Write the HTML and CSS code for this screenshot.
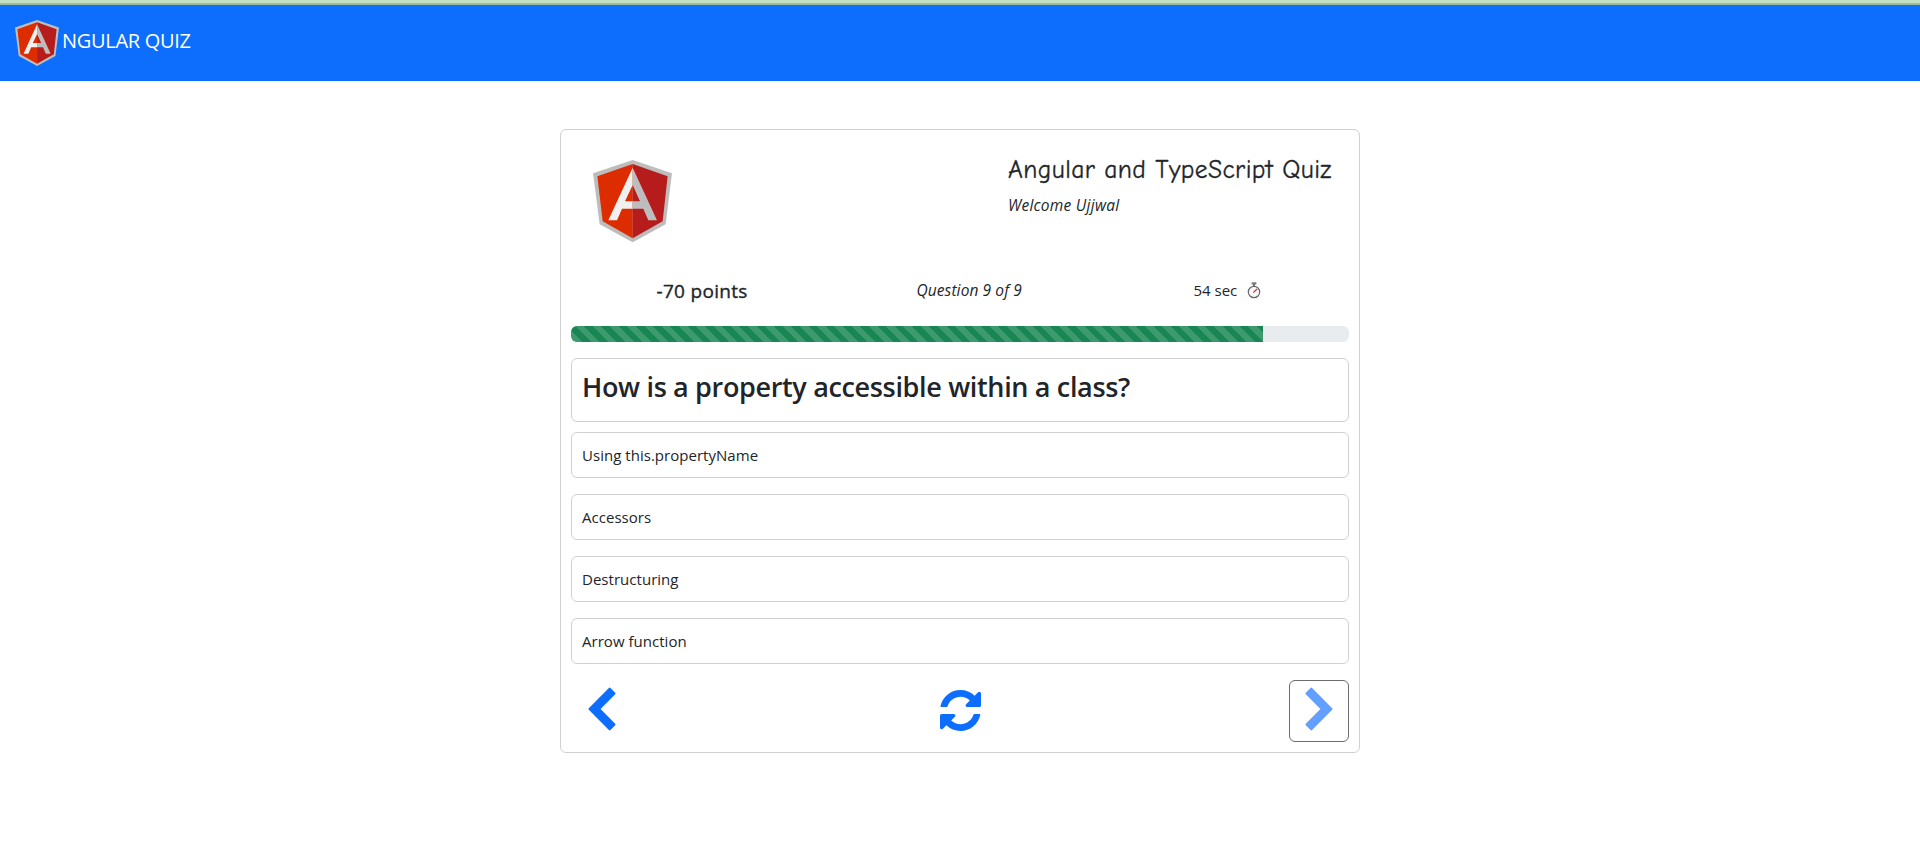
FILE: index.html
```html
<!DOCTYPE html>
<html lang="en">
<head>
<meta charset="utf-8">
<title>Angular Quiz</title>
<link rel="stylesheet" href="styles.css">
</head>
<body>
<svg class="defs" aria-hidden="true">
  <symbol id="shield" viewBox="127 119 237 247">
    <polygon fill="#bdbdbd" points="246,119 364,159 345,312 246,366 147,312 127,159"/>
    <polygon fill="#dd2c00" points="246,131 246,354 156,303 140,168"/>
    <polygon fill="#b71c1c" points="246,131 351,168 336,303 246,354"/>
    <polygon fill="#f0f0f0" points="246,142 173,300 199,300 214,265 246,265 246,243 223,243 246,194"/>
    <polygon fill="#bdbdbd" points="246,142 319,300 293,300 278,265 246,265 246,243 268,243 246,194"/>
  </symbol>
</svg>
<header class="navbar">
  <svg class="navbar-logo"><use href="#shield"/></svg>
  <span class="navbar-title">NGULAR QUIZ</span>
</header>
<main class="card">
  <div class="intro">
    <svg class="intro-logo"><use href="#shield"/></svg>
    <div class="intro-text">
      <h1 class="title">Angular and TypeScript Quiz</h1>
      <p class="welcome">Welcome Ujjwal</p>
    </div>
  </div>
  <div class="stats">
    <span class="points">-70 points</span>
    <span class="count">Question 9 of 9</span>
    <span class="timer"><span class="seconds">54 sec</span>
      <svg class="stopwatch" viewBox="0 0 14 17">
        <path d="M4.6 .3h4.800v2.200H4.600z" fill="#777"/>
        <path d="M7 2v2" stroke="#777" stroke-width="2"/>
        <circle cx="7" cy="10" r="5.7" fill="#fff" stroke="#666" stroke-width="1.2"/>
        <circle cx="7" cy="10" r="4" fill="none" stroke="#bbb" stroke-width=".7" stroke-dasharray=".7 2.4"/>
        <path d="M6.300 10.700L10 7" stroke="#e81224" stroke-width="1.1"/>
      </svg>
    </span>
  </div>
  <div class="progress"><div class="progress-bar" style="width:88.89%"></div></div>
  <div class="question"><h2 class="question-text">How is a property accessible within a class?</h2></div>
  <ol class="options">
    <li class="option">Using this.propertyName</li>
    <li class="option">Accessors</li>
    <li class="option">Destructuring</li>
    <li class="option">Arrow function</li>
  </ol>
  <div class="actions">
    <button class="btn btn-prev" aria-label="Previous">
      <svg class="chevron" viewBox="0 0 28 44"><path d="M.8 21.200Q.1 22 .8 22.800L20.900 43q.8.800 1.600 0l4.700-4.700q.8-.8 0-1.600L12.600 22 27.200 7.300q.8-.8 0-1.600L22.500 1q-.8-.8-1.600 0z"/></svg>
    </button>
    <button class="btn" aria-label="Restart">
      <svg class="refresh" viewBox="0 0 1536 1536"><path d="M1511 928q0 5-1 7-64 268-268 434.500T764 1536q-146 0-282.500-55T238 1324l-129 129q-19 19-45 19t-45-19-19-45V960q0-26 19-45t45-19h448q26 0 45 19t19 45-19 45l-137 137q71 66 161 102t187 36q134 0 250-65t186-179q11-17 53-117 8-23 30-23h192q13 0 22.500 9.500t9.500 22.500zm25-800v448q0 26-19 45t-45 19h-448q-26 0-45-19t-19-45 19-45l138-138Q969 256 768 256q-134 0-250 65T332 500q-11 17-53 117-8 23-30 23H50q-13 0-22.500-9.500T18 608v-7q65-268 270-434.500T768 0q146 0 284 55.500T1297 212l130-129q19-19 45-19t45 19 19 45z"/></svg>
    </button>
    <button class="btn btn-next" aria-label="Next" disabled>
      <svg class="chevron chevron-right" viewBox="0 0 28 44"><path d="M.8 21.200Q.1 22 .8 22.800L20.900 43q.8.800 1.600 0l4.700-4.700q.8-.8 0-1.600L12.600 22 27.200 7.300q.8-.8 0-1.600L22.500 1q-.8-.8-1.600 0z"/></svg>
    </button>
  </div>
</main>
</body>
</html>
```
FILE: styles.css
```css
* { box-sizing: border-box; }
body {
  margin: 0;
  background: #fff;
  color: #212529;
  font: 16px/24px "Open Sans", "Noto Sans", sans-serif;
  border-top: 3px solid #c3dfc3;
}
h1, h2, p, ol { margin: 0; padding: 0; font-weight: 400; }
span, h1, h2, p { white-space: nowrap; }
.defs { display: none; }
.navbar {
  display: flex;
  height: 78px;
  padding: 15px 15px 0;
  border-top: 2px solid #9dba9d;
  background: #0d6efd;
  color: #fff;
}
.navbar-logo { width: 44px; height: 46px; }
.navbar-title { margin: 6px 0 0 3px; font-size: 20px; line-height: 30px; letter-spacing: -.3px; }
.card {
  width: 800px;
  height: 624px;
  margin: 48px auto 0;
  padding: 10px;
  border: 1px solid #d0d1d2;
  border-radius: 6px;
}
.intro { display: flex; justify-content: space-between; height: 132px; padding: 20px 17px 0 21.500px; }
.intro-logo { width: 79px; height: 82.300px; }
.intro-text { width: 324px; }
.title {
  margin-top: -4px;
  font-family: "Comic Sans MS", "Comic Neue", "Open Sans", sans-serif;
  font-size: 25.500px;
  line-height: 28px;
  letter-spacing: .42px;
  -webkit-text-stroke: .3px currentColor;
}
.welcome { margin-top: 9px; font-style: italic; font-size: 15.500px; letter-spacing: .25px; }
.stats { display: flex; justify-content: space-around; height: 54px; padding-top: 6px; }
.points { width: 91px; margin-left: 1px; font-size: 19px; line-height: 26px; letter-spacing: .3px; -webkit-text-stroke: .35px currentColor; }
.count { width: 108px; font-style: italic; font-size: 15.500px; letter-spacing: .1px; }
.timer { display: flex; justify-content: space-between; width: 67px; margin-right: 4px; font-size: 15px; }
.stopwatch { width: 14px; height: 17px; margin-top: 4px; }
.progress { height: 16px; overflow: hidden; border-radius: 6px; background: #e9ecef; }
.progress-bar {
  height: 16px;
  background: repeating-linear-gradient(45deg, #198754 0 2px, #3c9a6e 2px 8.100px, #198754 8.100px 12.200px);
}
.question { height: 64px; margin-top: 16px; padding: 10px; border: 1px solid #d0d1d2; border-radius: 6px; }
.question-text { font-size: 27px; font-weight: 600; line-height: 36px; letter-spacing: -.34px; }
.options { display: grid; gap: 16px; margin-top: 10px; list-style: none; }
.option { height: 46px; padding: 10px; border: 1px solid #d0d1d2; border-radius: 6px; font-size: 15px; letter-spacing: .03px; }
.actions { display: flex; justify-content: space-between; margin-top: 16px; }
.btn {
  display: flex;
  justify-content: center;
  width: 60px;
  height: 62px;
  padding: 6px 0 0;
  border: 1px solid transparent;
  border-radius: 6px;
  background: none;
  color: #0d6efd;
}
.btn svg { fill: currentColor; }
.btn-prev { padding-left: 2px; }
.btn-next { padding-right: 1px; border-color: #6c6c6c; color: #629fff; }
.chevron { width: 28px; height: 44px; }
.chevron-right { transform: scaleX(-1); }
.refresh { width: 41px; height: 41px; margin-top: 3px; }
```
